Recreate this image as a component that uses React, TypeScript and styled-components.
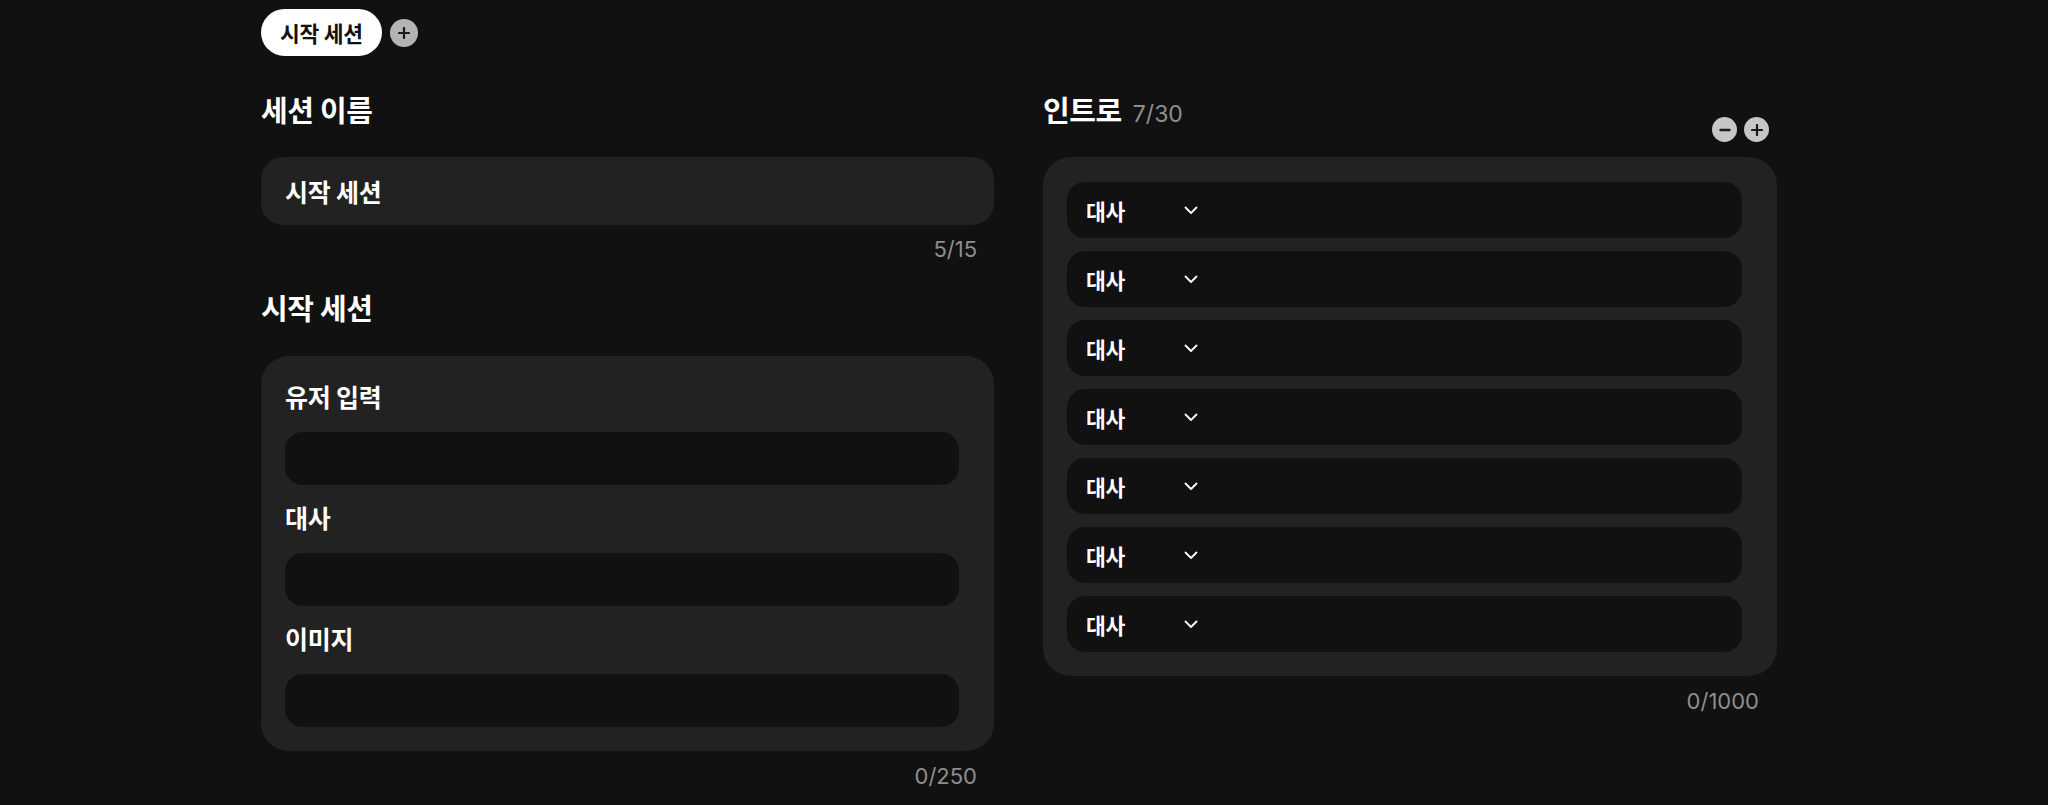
import React from "react";
import styled, { createGlobalStyle } from "styled-components";

const Global = createGlobalStyle`
  html, body { margin: 0; padding: 0; background: #111111; }
  body {
    font-family: Inter, "Noto Sans CJK KR", "Noto Sans", sans-serif;
    color: #ffffff;
    -webkit-font-smoothing: antialiased;
  }
  * { box-sizing: border-box; }
`;

const Page = styled.div`
  min-height: 805px;
  background: #111111;
  padding: 9px 0 0 261px;
`;

const TabBar = styled.div`
  display: flex;
  align-items: center;
  gap: 8px;
  height: 47px;
`;

const Tab = styled.div`
  height: 47px;
  padding: 0 19px;
  display: flex;
  align-items: center;
  background: #ffffff;
  color: #111111;
  border-radius: 999px;
  font-size: 21.5px;
  font-weight: 700;
  letter-spacing: -0.3px;
`;

const RoundButton = styled.button<{ $size: number; $bg: string }>`
  width: ${(p) => p.$size}px;
  height: ${(p) => p.$size}px;
  border-radius: 50%;
  border: none;
  padding: 0;
  background: ${(p) => p.$bg};
  display: flex;
  align-items: center;
  justify-content: center;
  color: #1a1a1a;
  cursor: pointer;
`;

const Columns = styled.div`
  display: grid;
  grid-template-columns: 733px 734px;
  column-gap: 49px;
  margin-top: 38px;
  align-items: start;
`;

const Column = styled.div`
  display: flex;
  flex-direction: column;
`;

const Heading = styled.h2<{ $mt?: number }>`
  margin: ${(p) => p.$mt ?? 0}px 0 0 0;
  font-size: 29px;
  line-height: 36px;
  font-weight: 700;
  letter-spacing: -0.4px;
  color: #ffffff;
`;

const NameInput = styled.div`
  margin-top: 27px;
  height: 68px;
  background: #222222;
  border-radius: 22px;
  padding: 0 24px;
  display: flex;
  align-items: center;
  font-size: 25px;
  font-weight: 700;
  letter-spacing: -0.3px;
  color: #ffffff;
`;

const Counter = styled.div<{ $pr: number; $mt: number }>`
  margin-top: ${(p) => p.$mt}px;
  text-align: right;
  padding-right: ${(p) => p.$pr}px;
  font-size: 22px;
  line-height: 30px;
  color: #8e8e8e;
`;

const Card = styled.div<{ $mt: number; $gap: number }>`
  margin-top: ${(p) => p.$mt}px;
  background: #222222;
  border-radius: 28px;
  padding: 25px 35px 24px 24px;
  display: flex;
  flex-direction: column;
  gap: ${(p) => p.$gap}px;
`;

const FieldLabel = styled.div`
  font-size: 25px;
  line-height: 34px;
  font-weight: 700;
  letter-spacing: -0.3px;
  color: #ffffff;
`;

const FieldInput = styled.div`
  height: 53px;
  background: #111111;
  border-radius: 18px;
`;

const HeaderRow = styled.div`
  display: flex;
  justify-content: space-between;
  align-items: flex-start;
`;

const TitleGroup = styled.div`
  display: flex;
  align-items: baseline;
  gap: 11px;
`;

const TitleCount = styled.span`
  font-size: 23px;
  color: #8e8e8e;
`;

const ButtonGroup = styled.div`
  display: flex;
  gap: 7px;
  margin-top: 23px;
  margin-right: 8px;
`;

const Row = styled.div`
  height: 56px;
  background: #111111;
  border-radius: 18px;
  padding: 0 19px;
  display: flex;
  align-items: center;
`;

const SelectTrigger = styled.div`
  width: 112px;
  display: flex;
  align-items: center;
  justify-content: space-between;
  font-size: 21.5px;
  font-weight: 700;
  letter-spacing: -0.3px;
  color: #ffffff;
`;

const PlusIcon = ({ s = 12 }: { s?: number }) => (
  <svg width={s} height={s} viewBox="0 0 12 12">
    <path d="M6 1v10M1 6h10" stroke="currentColor" strokeWidth="2.2" strokeLinecap="round" />
  </svg>
);

const MinusIcon = ({ s = 12 }: { s?: number }) => (
  <svg width={s} height={s} viewBox="0 0 12 12">
    <path d="M1.5 6h9" stroke="currentColor" strokeWidth="2.4" strokeLinecap="round" />
  </svg>
);

const Chevron = () => (
  <svg width="14" height="9" viewBox="0 0 14 9">
    <path d="M1.5 1.5L7 7l5.5-5.5" fill="none" stroke="#ffffff" strokeWidth="1.8" strokeLinecap="round" strokeLinejoin="round" />
  </svg>
);

const fields = ["유저 입력", "대사", "이미지"];
const rows = Array.from({ length: 7 }, (_, i) => i);

export default function App() {
  return (
    <>
      <Global />
      <Page>
        <TabBar>
          <Tab>시작 세션</Tab>
          <RoundButton $size={28} $bg="#b4b4b4" aria-label="세션 추가">
            <PlusIcon s={12} />
          </RoundButton>
        </TabBar>
        <Columns>
          <Column>
            <Heading>세션 이름</Heading>
            <NameInput>시작 세션</NameInput>
            <Counter $pr={17} $mt={9}>5/15</Counter>
            <Heading $mt={28}>시작 세션</Heading>
            <Card $mt={28} $gap={17}>
              {fields.map((f) => (
                <React.Fragment key={f}>
                  <FieldLabel>{f}</FieldLabel>
                  <FieldInput />
                </React.Fragment>
              ))}
            </Card>
            <Counter $pr={17} $mt={10}>0/250</Counter>
          </Column>
          <Column>
            <HeaderRow>
              <TitleGroup>
                <Heading>인트로</Heading>
                <TitleCount>7/30</TitleCount>
              </TitleGroup>
              <ButtonGroup>
                <RoundButton $size={25} $bg="#c6c6c6" aria-label="삭제">
                  <MinusIcon s={12} />
                </RoundButton>
                <RoundButton $size={25} $bg="#c6c6c6" aria-label="추가">
                  <PlusIcon s={12} />
                </RoundButton>
              </ButtonGroup>
            </HeaderRow>
            <Card $mt={15} $gap={13}>
              {rows.map((i) => (
                <Row key={i}>
                  <SelectTrigger>
                    <span>대사</span>
                    <Chevron />
                  </SelectTrigger>
                </Row>
              ))}
            </Card>
            <Counter $pr={18} $mt={10}>0/1000</Counter>
          </Column>
        </Columns>
      </Page>
    </>
  );
}
